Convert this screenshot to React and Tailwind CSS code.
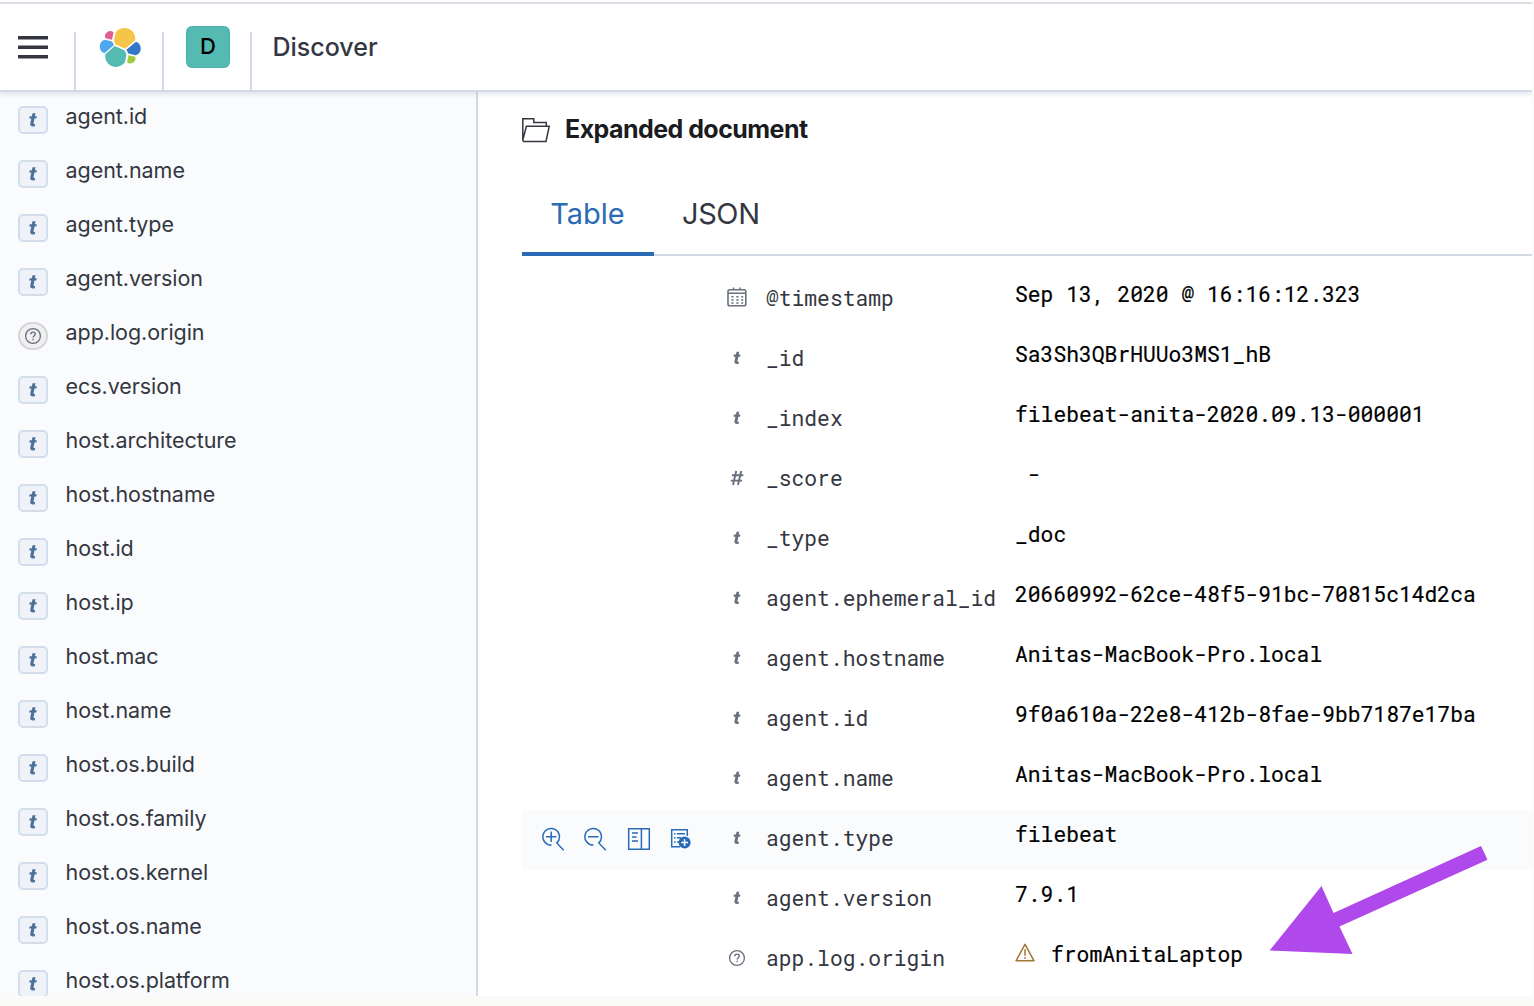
const inter = "font-['Inter',sans-serif]";
const mono = "font-['Roboto_Mono','Liberation_Mono',monospace]";

const fields = [
  'agent.id', 'agent.name', 'agent.type', 'agent.version', 'app.log.origin', 'ecs.version',
  'host.architecture', 'host.hostname', 'host.id', 'host.ip', 'host.mac', 'host.name',
  'host.os.build', 'host.os.family', 'host.os.kernel', 'host.os.name', 'host.os.platform',
];

const rows = [
  ['date', '@timestamp', 'Sep 13, 2020 @ 16:16:12.323'],
  ['t', '_id', 'Sa3Sh3QBrHUUo3MS1_hB'],
  ['t', '_index', 'filebeat-anita-2020.09.13-000001'],
  ['#', '_score', '\u00a0-'],
  ['t', '_type', '_doc'],
  ['t', 'agent.ephemeral_id', '20660992-62ce-48f5-91bc-70815c14d2ca'],
  ['t', 'agent.hostname', 'Anitas-MacBook-Pro.local'],
  ['t', 'agent.id', '9f0a610a-22e8-412b-8fae-9bb7187e17ba'],
  ['t', 'agent.name', 'Anitas-MacBook-Pro.local'],
  ['t', 'agent.type', 'filebeat'],
  ['t', 'agent.version', '7.9.1'],
  ['?', 'app.log.origin', 'fromAnitaLaptop'],
];

function ElasticLogo() {
  return (
    <svg width="44.5" height="42.8" viewBox="0 0 32 32" preserveAspectRatio="none">
      <path fill="#F5C549" d="M12.58 13.787l7.002 3.211 7.066-6.213a7.849 7.849 0 00.152-1.557c0-4.287-3.469-7.775-7.733-7.775a7.719 7.719 0 00-6.395 3.406l-1.175 6.12 1.083 2.808z" />
      <path fill="#55BAB2" d="M5.333 21.215a7.94 7.94 0 00-.151 1.575c0 4.3 3.48 7.8 7.756 7.8 2.57 0 4.98-1.27 6.42-3.4l1.166-6.11-1.556-2.99-7.03-3.22-6.605 6.345z" />
      <path fill="#DF5C97" d="M5.288 9.068l4.8 1.138L11.14 4.72a3.785 3.785 0 00-5.852 4.348" />
      <path fill="#4FA5EE" d="M4.871 10.216a5.36 5.36 0 00-3.604 5.058 5.366 5.366 0 003.447 5.016l6.733-6.12-1.236-2.657-5.34-1.297z" />
      <path fill="#9ECA3E" d="M20.87 27.277a3.8 3.8 0 002.311.784 3.797 3.797 0 003.785-3.8c0-.446-.076-.877-.222-1.283l-4.796-1.129-1.078 5.428z" />
      <path fill="#3277C8" d="M21.849 20.594l5.278 1.241A5.365 5.365 0 0030.73 16.77a5.37 5.37 0 00-3.447-5.01l-6.905 6.08 1.471 2.754z" />
    </svg>
  );
}

function StringGlyph() {
  return (
    <svg width="24" height="24" viewBox="0 0 24 24" fill="currentColor">
      <path d="M11.500 5.200h3l-.6 3h1.900l-.5 2.300h-1.800l-.95 4.600c-.1.8.2 1 .8 1l.8-.1-.4 2.200c-2.700.7-5-.1-4.500-2.700l1.050-5H8.200l.5-2.300H10.900z" />
    </svg>
  );
}

function QuestionGlyph() {
  return (
    <svg width="18" height="18" viewBox="0 0 18 18" fill="none" stroke="currentColor">
      <circle cx="9" cy="9" r="7.4" strokeWidth="1.3" />
      <path strokeWidth="1.4" d="M6.7 7.3c0-1.4 1-2.2 2.3-2.2s2.3.8 2.3 2c0 1.6-2.2 1.7-2.2 3.5M9.1 11.8v1.5" />
    </svg>
  );
}

function TypeIcon({ type }) {
  if (type === 't') return <StringGlyph />;
  if (type === '?') return <QuestionGlyph />;
  if (type === '#')
    return (
      <svg width="14" height="16" viewBox="0 0 14 16" fill="none" stroke="currentColor" strokeWidth="1.9">
        <path d="M6.2 1 3 15M11.2 1 8 15M2 5.3h11.3M.8 10.6H12" />
      </svg>
    );
  return (
    <svg width="20" height="20" viewBox="0 0 20 20" fill="none" stroke="currentColor" className="-mt-0.5">
      <rect x="1" y="2.8" width="17.8" height="16" rx="1.8" strokeWidth="1.6" />
      <path strokeWidth="1.5" d="M1 6.2h18M6.5.6v2M13 .6v2" />
      <path strokeWidth="1.5" strokeDasharray="2.2 2.7" d="M4.4 9.8h11.8M4.4 12.9h11.8M4.4 16h11.8" />
    </svg>
  );
}

function Actions() {
  return (
    <>
      <svg width="24" height="24" viewBox="0 0 24 24" fill="none" stroke="#2A6BB5" strokeWidth="1.5">
        <path d="M10.5 18.1A8.3 8.3 0 1 1 15.8 15.9L22.700 23.2M5 9.8h10.4M10.2 4.6V15" />
      </svg>
      <svg width="24" height="24" viewBox="0 0 24 24" fill="none" stroke="#2A6BB5" strokeWidth="1.5" className="ml-[18px]">
        <path d="M10.5 18.1A8.3 8.3 0 1 1 15.8 15.9L22.700 23.2M5 9.8h10.4" />
      </svg>
      <svg width="24" height="24" viewBox="0 0 24 24" fill="none" stroke="#2A6BB5" strokeWidth="1.5" className="ml-5">
        <path d="M1.7 1.7h20.6v20.6H1.7zM14.4 2v20M5 6h6M5 10h4.500M5 14h6" />
      </svg>
      <svg width="22" height="22" viewBox="0 0 22 22" fill="none" stroke="#2A6BB5" strokeWidth="1.5" className="ml-[19px]">
        <path d="M10 18.700H1.700V1.700h15.600V8" />
        <path d="M4 5.700h1.500M7 5.700h8M4 9.800h1.500M7 9.800h4M4 13.900h1.500M7 13.900h2" />
        <circle cx="14.600" cy="14.600" r="6" fill="#2A6BB5" stroke="none" />
        <path stroke="#fff" strokeWidth="1.500" d="M11.200 14.600H18M14.600 11.200V18" />
      </svg>
    </>
  );
}

function Field({ name }) {
  const unknown = name === 'app.log.origin';
  return (
    <li className="flex h-[54px] shrink-0 items-start pl-[18px]">
      <span
        className={
          unknown
            ? 'flex h-7 w-[30px] items-center justify-center rounded-full border-2 border-[#d6d6d8] bg-[#f0f0f2] text-[#696f7d]'
            : 'flex h-7 w-[30px] items-center justify-center rounded-[5px] border-2 border-[#d2deec] bg-[#eff3f9] text-[#4c7199]'
        }
      >
        <TypeIcon type={unknown ? '?' : 't'} />
      </span>
      <span className="-mt-1 ml-[17.500px] text-[21.500px] leading-7 tracking-[-0.050px] text-[#343741]">{name}</span>
    </li>
  );
}

function Row({ type, name, value }) {
  const hovered = name === 'agent.type';
  return (
    <div className={`flex h-[60px] ${hovered ? 'bg-[#f9fbfd]' : ''}`}>
      <div className="flex w-[204px] items-center pb-0.5 pl-[19px]">{hovered && <Actions />}</div>
      <div className="flex w-[22px] items-center justify-center pb-1 text-[#69707d]">
        <TypeIcon type={type} />
      </div>
      <div className={`w-[249px] shrink-0 pl-[18px] pt-3 text-[21.300px] leading-8 text-[#343741] ${mono}`}>{name}</div>
      <div className={`flex pl-[18px] pt-2 text-[21.330px] leading-8 text-black [-webkit-text-stroke:0.2px_black] ${mono}`}>
        {type === '?' && (
          <svg width="20" height="19" viewBox="0 0 20 19" fill="none" stroke="#a07533" strokeWidth="1.500" strokeLinejoin="round" className="mr-4 mt-[5px]">
            <path d="M10 1.300 18.900 17.700H1.100zM10 6.200v6.600M10 14v1.700" />
          </svg>
        )}
        {value}
      </div>
    </div>
  );
}

export default function App() {
  return (
    <div className={`relative h-[1006px] w-[1534px] overflow-hidden bg-[#fafaf8] ${inter}`}>
      <div className="flex h-[996px] w-[1532px] flex-col overflow-hidden bg-white pt-0.5">
        <header className="relative z-10 flex h-[90px] shrink-0 border-y-2 border-t-[#dcdde4] border-b-[#d3dae6] bg-white shadow-[0_3px_4px_rgba(130,145,170,0.18)]">
          <div className="flex h-full w-[74px] items-start pl-[18px] pt-8">
            <svg width="30" height="24" viewBox="0 0 30 24" fill="#343741">
              <path d="M0 0h30v3.400H0zM0 9.500h30v3.400H0zM0 19h30v3.400H0z" />
            </svg>
          </div>
          <div className="mt-7 w-0.5 bg-[#d3dae6]" />
          <div className="flex w-[86px] items-start pl-[21.500px] pt-[21.500px]"><ElasticLogo /></div>
          <div className="mt-7 w-0.5 bg-[#d3dae6]" />
          <div className="flex w-[86px] items-start pl-[22px] pt-[22px]">
            <div className="flex h-[42px] w-11 items-center justify-center rounded-[6px] bg-[#55bab2] pb-0.5 text-[22px] font-medium text-black shadow-[inset_0_0_0_1px_rgba(0,0,0,0.05)]">D</div>
          </div>
          <div className="mt-7 w-0.5 bg-[#d3dae6]" />
          <div className="pl-[20.500px] pt-[27px] text-[25px] font-medium leading-8 text-[#343741]">Discover</div>
        </header>
        <div className="flex min-h-0 flex-1">
          <aside className="w-[478px] shrink-0 overflow-hidden border-r-2 border-[#d3dae6] bg-[#fafbfd] pt-[14px]">
            <ul className="flex flex-col">{fields.map((f) => <Field key={f} name={f} />)}</ul>
          </aside>
          <main className="flex-1 overflow-hidden pl-11">
            <div className="flex h-[76px] items-start pt-[21px]">
              <svg width="28" height="30" viewBox="0 0 28 30" fill="none" stroke="#343741" strokeWidth="1.500" className="mt-px">
                <path d="M.8 26V4.800h11v3.800h12.500v3.800M.8 26 4.400 12.300H27.200L24 27.500H1.500z" />
              </svg>
              <h1 className="ml-[15px] text-[25px] font-bold leading-8 tracking-[-0.550px] text-[#1a1c21]">Expanded document</h1>
            </div>
            <div className="flex h-[88px] border-b-2 border-[#d3dae6] text-[29px] leading-10">
              <div className="box-content h-[84px] w-[132px] border-b-4 border-[#2a6bb5] pt-0 text-center text-[#2a6bb5]">
                <div className="pr-px pt-[26px]">Table</div>
              </div>
              <div className="pl-7 pt-[26px] tracking-[-0.400px] text-[#343741]">JSON</div>
            </div>
            <div className="pt-[14px]">
              {rows.map(([type, name, value]) => <Row key={name} type={type} name={name} value={value} />)}
            </div>
          </main>
        </div>
      </div>
      <svg className="absolute left-[1268.500px] top-[845px]" width="219" height="110" viewBox="0 0 219 110" fill="#af49ec">
        <path d="M.5 105.500 52.500 41 64.500 68 212 1 218.500 14.800 70.500 81.500 83.500 109z" />
      </svg>
    </div>
  );
}
